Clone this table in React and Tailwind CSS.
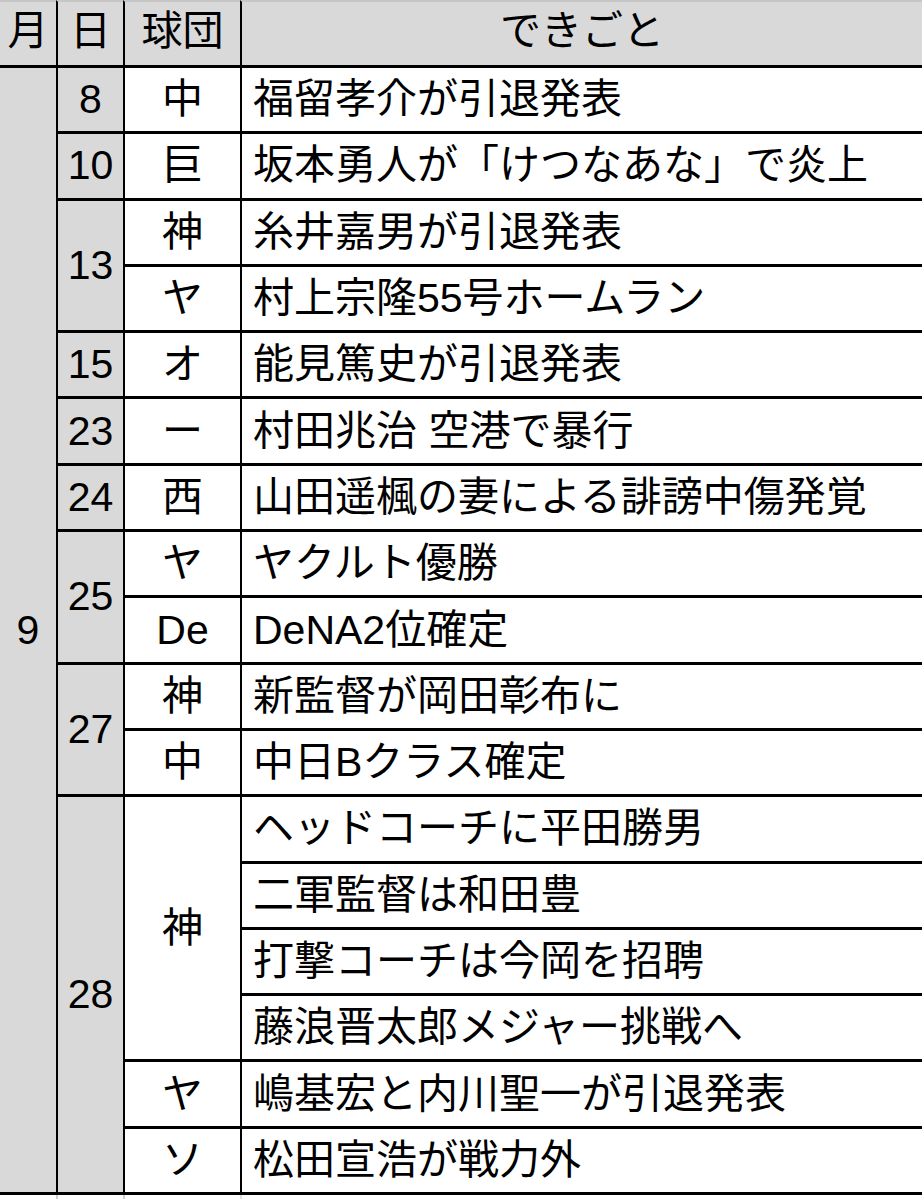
const days = [
  { d: "8", teams: [{ t: "中", ev: ["福留孝介が引退発表"] }] },
  { d: "10", teams: [{ t: "巨", ev: ["坂本勇人が「けつなあな」で炎上"] }] },
  {
    d: "13",
    teams: [
      { t: "神", ev: ["糸井嘉男が引退発表"] },
      { t: "ヤ", ev: ["村上宗隆55号ホームラン"] },
    ],
  },
  { d: "15", teams: [{ t: "オ", ev: ["能見篤史が引退発表"] }] },
  { d: "23", teams: [{ t: "ー", ev: ["村田兆治 空港で暴行"] }] },
  { d: "24", teams: [{ t: "西", ev: ["山田遥楓の妻による誹謗中傷発覚"] }] },
  {
    d: "25",
    teams: [
      { t: "ヤ", ev: ["ヤクルト優勝"] },
      { t: "De", ev: ["DeNA2位確定"] },
    ],
  },
  {
    d: "27",
    teams: [
      { t: "神", ev: ["新監督が岡田彰布に"] },
      { t: "中", ev: ["中日Bクラス確定"] },
    ],
  },
  {
    d: "28",
    teams: [
      {
        t: "神",
        ev: [
          "ヘッドコーチに平田勝男",
          "二軍監督は和田豊",
          "打撃コーチは今岡を招聘",
          "藤浪晋太郎メジャー挑戦へ",
        ],
      },
      { t: "ヤ", ev: ["嶋基宏と内川聖一が引退発表"] },
      { t: "ソ", ev: ["松田宣浩が戦力外"] },
    ],
  },
];

const span = {
  1: "row-span-1",
  2: "row-span-2",
  4: "row-span-4",
  6: "row-span-6",
};

const font = {
  fontFamily: '"Liberation Sans", "Noto Sans CJK JP", sans-serif',
};

function App() {
  const cells = [];
  days.forEach((day, di) => {
    const total = day.teams.reduce((n, t) => n + t.ev.length, 0);
    day.teams.forEach((team, ti) => {
      team.ev.forEach((e, ei) => {
        if (ti === 0 && ei === 0) {
          cells.push(
            <div
              key={`d${di}`}
              className={`col-start-2 ${span[total]} flex items-center justify-center border-l-2 border-t-[3px] border-black bg-[#d9d9d9]`}
            >
              {day.d}
            </div>
          );
        }
        if (ei === 0) {
          cells.push(
            <div
              key={`t${di}-${ti}`}
              className={`col-start-3 ${span[team.ev.length]} flex items-center justify-center border-l-2 border-t-[3px] border-black bg-white`}
            >
              {team.t}
            </div>
          );
        }
        cells.push(
          <div
            key={`e${di}-${ti}-${ei}`}
            className="col-start-4 row-span-1 flex items-center border-l-2 border-t-[3px] border-black bg-white pl-[11px] whitespace-nowrap"
          >
            {e}
          </div>
        );
      });
    });
  });

  return (
    <div className="w-[922px] h-[1200px] overflow-hidden bg-white text-black text-[41px] leading-none" style={font}>
      <div className="grid grid-cols-[56px_67px_117px_1fr] grid-rows-[65px_repeat(17,66.3px)] border-b-[3px] border-black">
        <div className="col-start-1 flex items-center justify-center border-t-2 border-[#c6c6c6] bg-[#d9d9d9] pb-1">月</div>
        <div className="col-start-2 flex items-center justify-center border-l-2 border-t-2 border-black border-t-[#c6c6c6] bg-[#d9d9d9] pb-1">日</div>
        <div className="col-start-3 flex items-center justify-center border-l-2 border-t-2 border-black border-t-[#c6c6c6] bg-[#d9d9d9] pb-1">球団</div>
        <div className="col-start-4 flex items-center justify-center border-l-2 border-t-2 border-black border-t-[#c6c6c6] bg-[#d9d9d9] pb-1">できごと</div>
        <div className="col-start-1 row-span-17 flex items-center justify-center border-t-[3px] border-black bg-[#d9d9d9]">9</div>
        {cells}
      </div>
      <div className="flex h-[4px]">
        <div className="w-[56px]" />
        <div className="w-[67px] border-l-2 border-[#d0d0d0]" />
        <div className="w-[117px] border-l-2 border-[#d0d0d0]" />
        <div className="flex-1 border-l-2 border-[#e0e0e0]" />
      </div>
    </div>
  );
}

export default App;
